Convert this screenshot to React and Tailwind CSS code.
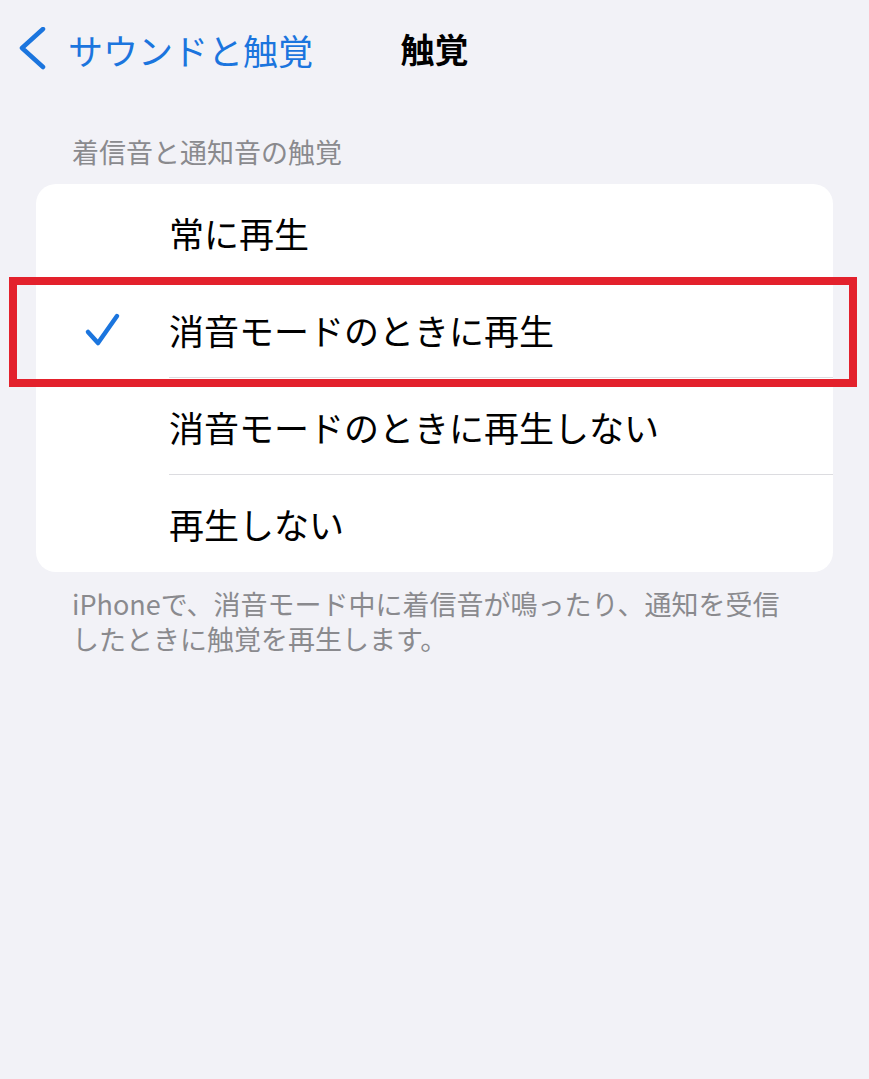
import React from "react";

const font = { fontFamily: '"Noto Sans CJK JP", "Noto Sans", sans-serif' };

function Row({ label, checked, sep }) {
  return (
    <div className="flex h-[97px] items-stretch">
      <div className="flex w-[133px] shrink-0 items-center">
        {checked && (
          <svg width="44" height="44" viewBox="0 0 44 44" className="ml-[45px]">
            <path d="M7 24 L17 35 L36 8" fill="none" stroke="#1b75de" strokeWidth="4.5" strokeLinecap="round" strokeLinejoin="round" />
          </svg>
        )}
      </div>
      <div className={"flex flex-1 items-center " + (sep ? "border-b border-[#dcdce0]" : "")}>
        <span className="text-[35px] leading-none text-black">{label}</span>
      </div>
    </div>
  );
}

export default function App() {
  return (
    <div className="relative min-h-[1079px] w-full bg-[#f2f2f7]" style={font}>
      <div className="grid h-[98px] grid-cols-[1fr_auto_1fr] items-center">
        <div className="flex items-center pl-[18px]">
          <svg width="28" height="44" viewBox="0 0 28 44">
            <path d="M25 2 L4 21 L25 40" fill="none" stroke="#1b75de" strokeWidth="4.5" strokeLinecap="round" strokeLinejoin="round" />
          </svg>
          <span className="ml-[22px] text-[35px] leading-none text-[#1b75de]">サウンドと触覚</span>
        </div>
        <div className="text-[34px] font-bold leading-none text-black">触覚</div>
        <div />
      </div>
      <div className="mt-[36px] pl-[72px] text-[27px] leading-[36px] text-[#8a8a8e]">着信音と通知音の触覚</div>
      <div className="mx-[36px] mt-[14px] overflow-hidden rounded-[20px] bg-white">
        <Row label="常に再生" sep />
        <Row label="消音モードのときに再生" checked sep />
        <Row label="消音モードのときに再生しない" sep />
        <Row label="再生しない" />
      </div>
      <div className="mt-[14px] pl-[72px] text-[27px] leading-[35px] text-[#8a8a8e]">
        iPhoneで、消音モード中に着信音が鳴ったり、通知を受信
        <br />
        したときに触覚を再生します。
      </div>
      <div className="absolute left-[9px] top-[277px] h-[110px] w-[848px] border-[8px] border-[#e3212c]" />
    </div>
  );
}
